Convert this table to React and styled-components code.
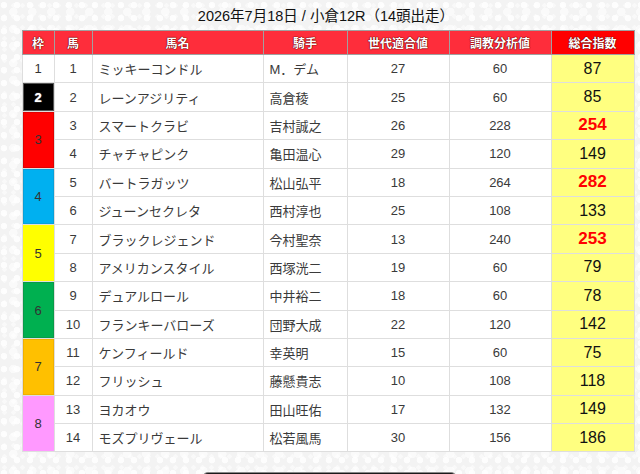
import React from "react";
import styled, { createGlobalStyle } from "styled-components";

const Global = createGlobalStyle`
  html, body { margin: 0; padding: 0; }
  body {
    width: 640px;
    height: 474px;
    overflow: hidden;
    font-family: "Liberation Sans", "Noto Sans CJK JP", sans-serif;
    background-color: #f3f3f3;
    background-image:
      radial-gradient(circle at 30% 40%, rgba(255,255,255,0.8) 0 3px, transparent 3.5px),
      radial-gradient(circle at 70% 70%, rgba(255,255,255,0.6) 0 4px, transparent 4.5px),
      radial-gradient(circle at 50% 50%, rgba(255,255,255,0.5) 0 2px, transparent 2.5px);
    background-size: 13px 13px, 19px 17px, 9px 11px;
  }
`;

const Page = styled.div`
  position: relative;
  width: 640px;
  height: 474px;
  display: flex;
  flex-direction: column;
  align-items: center;
`;

const Title = styled.h1`
  margin: 6px 0 0 12px;
  height: 24px;
  font-size: 14.5px;
  font-weight: 400;
  color: #111;
  line-height: 20px;
`;

const Table = styled.table`
  width: 612px;
  margin-left: 16px;
  border-collapse: collapse;
  table-layout: fixed;
  background: #fff;
  border: 1px solid #dcdcdc;
`;

const Th = styled.th`
  height: 23px;
  padding: 0;
  font-size: 12px;
  font-weight: 700;
  color: #fff;
  background: ${(p) => (p.$strong ? "#ff0000" : "#fe2d3b")};
  border: 1px solid #a0a0a0;
  text-shadow: 0 0 1px #600, 0 0 1px #600, 0 0 1px #600;
  text-align: center;
`;

const Td = styled.td`
  height: 27.4px;
  padding: 0 ${(p) => (p.$left ? "6px" : "0")};
  border: 1px solid #dedede;
  font-size: 13px;
  color: #3a3a3a;
  text-align: ${(p) => (p.$left ? "left" : "center")};
  white-space: nowrap;
`;

const WakuCell = styled.td`
  padding: 0;
  text-align: center;
  font-size: 13px;
  color: ${(p) => (p.$dark ? "#fff" : "#333")};
  font-weight: ${(p) => (p.$dark ? 700 : 400)};
  text-shadow: ${(p) => (p.$dark ? "0 0 1px #fff" : "none")};
  background: ${(p) => p.$bg};
  border: 1px solid #dedede;
  box-shadow: inset 0 0 0 1px ${(p) => p.$edge};
`;

const TotalCell = styled.td`
  padding: 0;
  border: 1px solid #dedede;
  background: #ffff80;
  text-align: center;
  font-size: ${(p) => (p.$hi ? "17px" : "16px")};
  font-weight: ${(p) => (p.$hi ? 700 : 400)};
  color: ${(p) => (p.$hi ? "#ff0000" : "#111")};
`;

const HomeBar = styled.div`
  position: absolute;
  left: 202px;
  top: 472px;
  width: 253px;
  height: 12px;
  border-radius: 6px;
  background: #1a1a1a;
  border: 1px solid #888;
`;

const waku = {
  1: { bg: "#ffffff", edge: "#ffffff" },
  2: { bg: "#000000", edge: "#555", dark: true },
  3: { bg: "#ff0000", edge: "#e00000" },
  4: { bg: "#00b0f0", edge: "#0aa0d8" },
  5: { bg: "#ffff00", edge: "#ffff00" },
  6: { bg: "#00b050", edge: "#0a9a48" },
  7: { bg: "#ffc000", edge: "#f0b000" },
  8: { bg: "#ff99ff", edge: "#ff99ff" },
};

const rows = [
  [1, 1, "ミッキーコンドル", "M．デム", 27, 60, 87],
  [2, 2, "レーンアジリティ", "高倉稜", 25, 60, 85],
  [3, 3, "スマートクラビ", "吉村誠之", 26, 228, 254],
  [3, 4, "チャチャピンク", "亀田温心", 29, 120, 149],
  [4, 5, "バートラガッツ", "松山弘平", 18, 264, 282],
  [4, 6, "ジューンセクレタ", "西村淳也", 25, 108, 133],
  [5, 7, "ブラックレジェンド", "今村聖奈", 13, 240, 253],
  [5, 8, "アメリカンスタイル", "西塚洸二", 19, 60, 79],
  [6, 9, "デュアルロール", "中井裕二", 18, 60, 78],
  [6, 10, "フランキーバローズ", "団野大成", 22, 120, 142],
  [7, 11, "ケンフィールド", "幸英明", 15, 60, 75],
  [7, 12, "フリッシュ", "藤懸貴志", 10, 108, 118],
  [8, 13, "ヨカオウ", "田山旺佑", 17, 132, 149],
  [8, 14, "モズプリヴェール", "松若風馬", 30, 156, 186],
];

const widths = [32, 38, 171, 84, 102, 102, 83];

export default function App() {
  return (
    <>
      <Global />
      <Page>
        <Title>2026年7月18日 / 小倉12R（14頭出走）</Title>
        <Table>
          <colgroup>
            {widths.map((w, i) => (
              <col key={i} style={{ width: w }} />
            ))}
          </colgroup>
          <thead>
            <tr>
              <Th>枠</Th>
              <Th>馬</Th>
              <Th>馬名</Th>
              <Th>騎手</Th>
              <Th>世代適合値</Th>
              <Th>調教分析値</Th>
              <Th $strong>総合指数</Th>
            </tr>
          </thead>
          <tbody>
            {rows.map((r, i) => {
              const [w, no, name, jockey, a, b, total] = r;
              const count = rows.filter((x) => x[0] === w).length;
              const first = rows.findIndex((x) => x[0] === w) === i;
              const c = waku[w];
              return (
                <tr key={no}>
                  {first && (
                    <WakuCell rowSpan={count} $bg={c.bg} $edge={c.edge} $dark={c.dark}>
                      {w}
                    </WakuCell>
                  )}
                  <Td>{no}</Td>
                  <Td $left>{name}</Td>
                  <Td $left>{jockey}</Td>
                  <Td>{a}</Td>
                  <Td>{b}</Td>
                  <TotalCell $hi={total >= 250}>{total}</TotalCell>
                </tr>
              );
            })}
          </tbody>
        </Table>
        <HomeBar />
      </Page>
    </>
  );
}
